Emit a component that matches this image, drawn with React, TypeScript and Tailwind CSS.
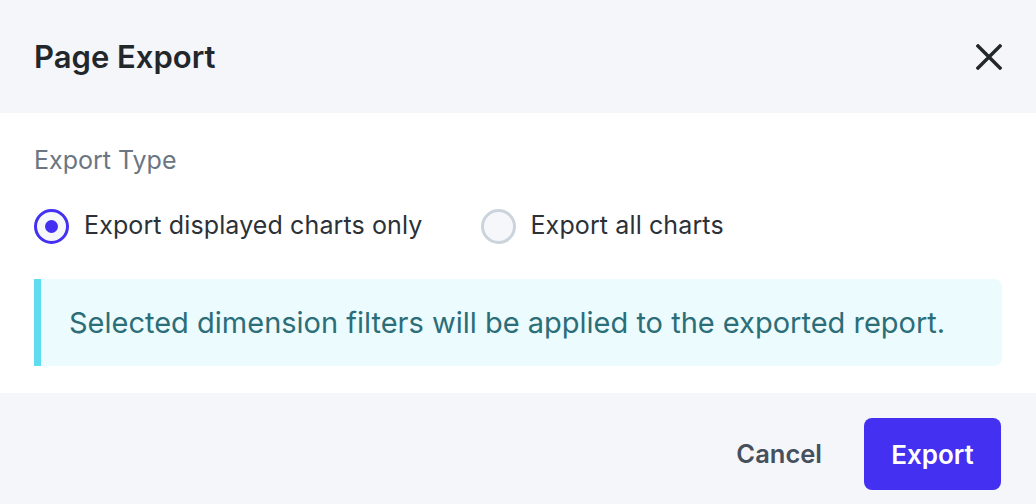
import React from "react";

export default function App() {
  return (
    <div className="w-[1036px] h-[504px] overflow-hidden bg-white" style={{ fontFamily: "Inter, 'Noto Sans', sans-serif" }}>
      <div className="h-[113px] bg-[#f5f6fa] flex items-center justify-between pl-[34px] pr-[34px]">
        <h1 className="text-[31px] font-semibold text-[#22272c] leading-none">Page Export</h1>
        <svg width="26" height="26" viewBox="0 0 26 26">
          <path d="M2 2 L24 24 M24 2 L2 24" stroke="#22272c" strokeWidth="3.4" strokeLinecap="square" />
        </svg>
      </div>
      <div className="h-[280px] px-[34px] pt-[32px]">
        <div className="text-[25px] leading-[30px] text-[#6b7682]">Export Type</div>
        <div className="flex items-center mt-[33px] h-[36px]">
          <label className="flex items-center">
            <span className="w-[35px] h-[35px] rounded-full border-[3px] border-[#4330f0] bg-[#f6f7fb] flex items-center justify-center">
              <span className="w-[13px] h-[13px] rounded-full bg-[#4330f0]" />
            </span>
            <span className="ml-[15px] text-[25px] tracking-[0.12px] text-[#2b3137]">Export displayed charts only</span>
          </label>
          <label className="flex items-center ml-[59px]">
            <span className="w-[35px] h-[35px] rounded-full border-[3px] border-[#cbd3dc] bg-[#f6f7fb]" />
            <span className="ml-[14px] text-[25px] tracking-[0.12px] text-[#2b3137]">Export all charts</span>
          </label>
        </div>
        <div className="mt-[35px] h-[87px] bg-[#ebfbfe] border-l-[7px] border-[#60dcf0] rounded-r-[8px] flex items-center pl-[28px]">
          <span className="text-[29px] text-[#2b6e78]">Selected dimension filters will be applied to the exported report.</span>
        </div>
      </div>
      <div className="h-[111px] bg-[#f5f6fa] flex items-start justify-end pr-[35px] pt-[25px]">
        <button className="h-[72px] px-[14px] mr-[28px] text-[25.5px] font-semibold text-[#46505c]">Cancel</button>
        <button className="h-[72px] w-[137px] rounded-[8px] bg-[#4430f0] text-white text-[26px] font-semibold">Export</button>
      </div>
    </div>
  );
}
